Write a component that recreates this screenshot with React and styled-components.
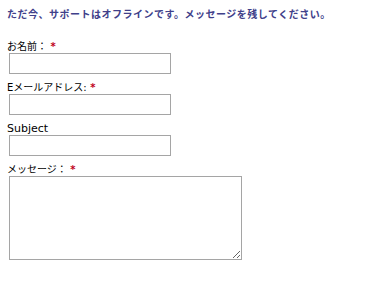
import React from 'react';
import styled, { createGlobalStyle } from 'styled-components';

const GlobalStyle = createGlobalStyle`
  body {
    margin: 0;
    background: #fff;
    font-family: "DejaVu Sans", "Noto Sans CJK JP", sans-serif;
  }
`;

const fields = [
  { id: 'name', label: 'お名前：', required: true },
  { id: 'email', label: 'Eメールアドレス:', required: true },
  { id: 'subject', label: 'Subject', latin: true },
];

export default function App() {
  return (
    <>
      <GlobalStyle />
      <Container>
        <Notice>ただ今、サポートはオフラインです。メッセージを残してください。</Notice>
        <Form onSubmit={(e) => e.preventDefault()}>
          {fields.map((f) => (
            <Field key={f.id}>
              <Label htmlFor={f.id} $latin={f.latin}>
                {f.label}
                {f.required && <Required> *</Required>}
              </Label>
              <Input id={f.id} type="text" />
            </Field>
          ))}
          <Field>
            <Label htmlFor="message">
              メッセージ：
              <Required> *</Required>
            </Label>
            <TextArea id="message" />
          </Field>
        </Form>
      </Container>
    </>
  );
}

const Container = styled.div`
  padding: 7px 0 0 7px;
`;

const Notice = styled.p`
  margin: 0 0 19px;
  font-family: "Noto Sans CJK JP", sans-serif;
  font-size: 10px;
  line-height: 14px;
  font-weight: bold;
  letter-spacing: 0.5px;
  color: #40408a;
`;

const Form = styled.form`
  display: flex;
  flex-direction: column;
`;

const Field = styled.div`
  display: flex;
  flex-direction: column;
  align-items: flex-start;
  margin-bottom: 7px;
`;

const Label = styled.label`
  font-size: ${(p) => (p.$latin ? '11px' : '10px')};
  line-height: 13px;
  color: #000;
`;

const Required = styled.span`
  color: #c00020;
  font-weight: bold;
`;

const Input = styled.input`
  box-sizing: border-box;
  margin: 0 0 0 2px;
  width: 162px;
  height: 21px;
  padding: 2px 3px;
  border: 1px solid #a5a5a5;
  background: #fff;
  font-size: 11px;
  outline: none;
`;

const TextArea = styled.textarea`
  box-sizing: border-box;
  margin: 0 0 0 2px;
  width: 233px;
  height: 84px;
  padding: 2px 3px;
  border: 1px solid #a5a5a5;
  background: #fff;
  font-size: 11px;
  outline: none;
`;
